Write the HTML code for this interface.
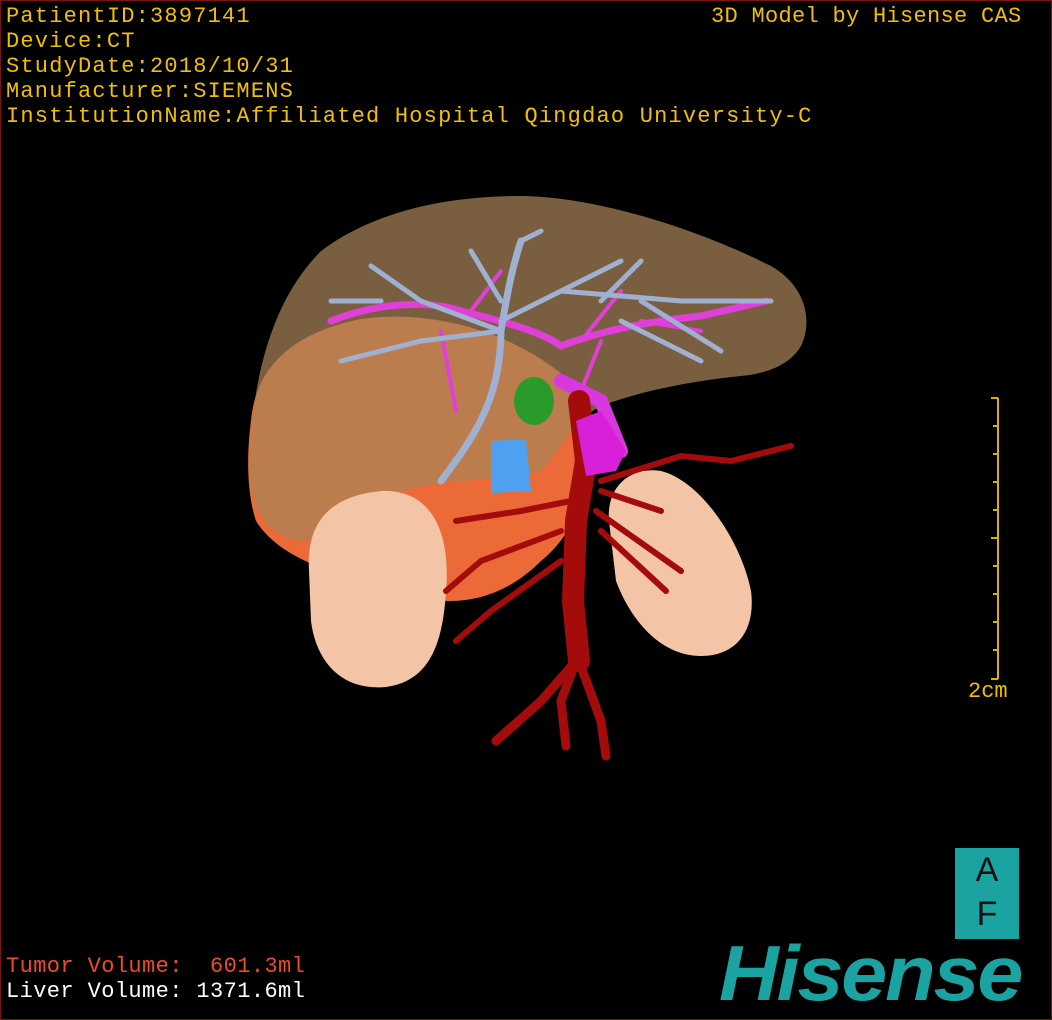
<!DOCTYPE html>
<html><head><style>
html,body{margin:0;padding:0;background:#000;}
#w{position:relative;width:1050px;height:1018px;border:1px solid #7a1414;background:#000;overflow:hidden;font-family:"Liberation Mono","DejaVu Sans Mono",monospace;}
.t{position:absolute;color:#f0c000;font-size:22px;line-height:25px;white-space:pre;letter-spacing:1.2px;}
.r{color:#f04a2a;}
.w2{color:#ffffff;}
</style></head><body><div id="w">
<div class="t" style="left:5px;top:3px">PatientID:3897141<br>Device:CT<br>StudyDate:2018/10/31<br>Manufacturer:SIEMENS<br>InstitutionName:Affiliated Hospital Qingdao University-C</div>
<div class="t" style="left:710px;top:3px;letter-spacing:0.3px">3D Model by Hisense CAS</div>
<div class="t r" style="left:5px;top:953px;letter-spacing:0.4px">Tumor Volume:  601.3ml</div>
<div class="t w2" style="left:5px;top:978px;letter-spacing:0.4px">Liver Volume: 1371.6ml</div>
<div class="t" style="left:967px;top:678px;letter-spacing:0">2cm</div>
<svg width="1050" height="1018" style="position:absolute;left:0;top:0">
<g stroke="#e0b000" stroke-width="2">
<line x1="997" y1="397" x2="997" y2="678"/>
<line x1="990" y1="397" x2="997" y2="397"/><line x1="990" y1="678" x2="997" y2="678"/>
<line x1="992" y1="425" x2="997" y2="425"/><line x1="992" y1="453" x2="997" y2="453"/><line x1="992" y1="481" x2="997" y2="481"/><line x1="992" y1="509" x2="997" y2="509"/><line x1="990" y1="537" x2="997" y2="537"/><line x1="992" y1="565" x2="997" y2="565"/><line x1="992" y1="593" x2="997" y2="593"/><line x1="992" y1="621" x2="997" y2="621"/><line x1="992" y1="649" x2="997" y2="649"/>
</g>
<path d="M250,420 C255,360 300,330 360,318 C430,308 520,330 580,390 C600,440 590,520 540,560 C500,600 450,610 400,590 C340,575 280,560 255,520 C245,490 246,450 250,420Z" fill="#ec6a38"/>
<path d="M248,470 C250,380 270,300 320,250 C380,205 460,195 520,195 C600,196 700,230 770,265 C805,285 812,320 800,345 C790,362 770,372 740,375 C690,380 640,390 600,405 C570,420 560,450 540,470 C500,480 440,478 400,490 C360,505 320,540 300,540 C265,535 248,505 248,470Z" fill="#a88458" fill-opacity="0.72"/>
<path d="M308,570 C305,520 330,495 380,490 C430,488 450,530 445,590 C442,640 430,680 385,686 C340,690 315,660 310,620Z" fill="#f3c4a6"/>
<path d="M608,520 C605,485 630,465 660,470 C700,480 740,540 750,590 C755,630 735,655 700,655 C660,655 630,620 615,580Z" fill="#f3c4a6"/>
<g stroke="#e040d8" fill="none" stroke-linecap="round">
<path d="M330,320 C380,300 430,300 460,310 C500,320 540,330 560,345 C600,330 650,320 700,315 L765,300" stroke-width="7"/>
<path d="M440,330 L455,410 M470,310 L500,270 M580,340 L620,290 M640,320 L700,330 M600,340 L580,390 L600,450" stroke-width="4"/>
<path d="M560,380 L600,400 L620,450" stroke-width="14" stroke="#d838e0"/>
</g>
<g stroke="#9fb0d0" fill="none" stroke-linecap="round">
<path d="M440,480 C470,440 500,400 500,330 C505,300 510,270 520,240" stroke-width="7"/>
<path d="M500,330 L420,300 L370,265 M500,330 L420,340 L340,360 M500,320 L560,290 L620,260 M560,290 L680,300 L770,300 M600,300 L640,260 M520,240 L540,230 M470,250 L500,300 M640,300 L720,350 M330,300 L380,300 M620,320 L700,360" stroke-width="5"/>
</g>
<ellipse cx="533" cy="400" rx="20" ry="24" fill="#2a9a2a"/>
<path d="M490,440 L525,438 L530,490 L490,492Z" fill="#4fa0f0"/>
<g stroke="#a40c0c" fill="none" stroke-linecap="round">
<path d="M578,400 L585,460 L575,520 L572,600 L578,660" stroke-width="22"/>
<path d="M575,660 L540,700 L495,740 M578,660 L600,720 L605,755 M575,660 L560,700 L565,745" stroke-width="9"/>
<path d="M570,500 L520,510 L455,520 M560,530 L480,560 L445,590 M560,560 L490,610 L455,640 M600,490 L660,510 M595,510 L680,570 M600,530 L665,590 M600,480 L680,455 L730,460 L790,445" stroke-width="6"/>
</g>
<path d="M575,420 L600,410 L625,450 L615,470 L585,475Z" fill="#d820d8"/>
</svg>
<div style="position:absolute;left:954px;top:847px;width:64px;height:91px;background:#1aa3a0;font-family:'Liberation Sans',sans-serif;font-size:34px;color:#111;text-align:center;line-height:44px;">A<br>F</div>
<div style="position:absolute;left:718px;top:932px;font-family:'Liberation Sans',sans-serif;font-weight:bold;font-style:italic;font-size:78px;color:#1aa3a0;letter-spacing:-2px;line-height:80px;transform:scaleX(1.06);transform-origin:left;">Hisense</div>
</div></body></html>
